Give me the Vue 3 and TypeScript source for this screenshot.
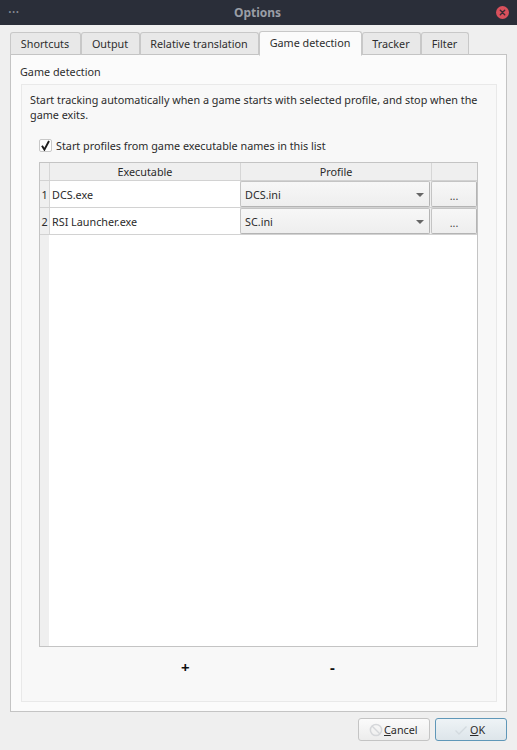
<script setup lang="ts">
const tabs: string[] = ['Shortcuts', 'Output', 'Relative translation', 'Game detection', 'Tracker', 'Filter']
const tabWidths: Record<string, number> = { Shortcuts: 71, Output: 59, 'Relative translation': 119, 'Game detection': 103, Tracker: 59, Filter: 48 }
const rows = [
  { n: 1, exe: 'DCS.exe', profile: 'DCS.ini' },
  { n: 2, exe: 'RSI Launcher.exe', profile: 'SC.ini' },
]
</script>

<template>
  <div class="window">
    <header class="titlebar">
      <span class="dots">···</span>
      <span class="title">Options</span>
      <span class="close">
        <svg width="13" height="13" viewBox="0 0 13 13">
          <circle cx="6.5" cy="6.5" r="6.5" fill="#d9505c" />
          <path d="M4.3 4.3l4.4 4.4M8.7 4.3l-4.4 4.4" stroke="#3a2a33" stroke-width="1.4" stroke-linecap="round" />
        </svg>
      </span>
    </header>

    <main class="content">
      <nav class="tabs">
        <div
          v-for="t in tabs"
          :key="t"
          class="tab"
          :class="{ active: t === 'Game detection' }"
          :style="{ width: tabWidths[t] + 'px' }"
        >{{ t }}</div>
      </nav>
      <section class="pane">
        <div class="group-title">Game detection</div>
        <div class="group">
          <p class="desc">Start tracking automatically when a game starts with selected profile, and stop when the game exits.</p>
          <label class="check">
            <span class="box">
              <svg width="11" height="11" viewBox="0 0 11 11">
                <path d="M2 5.8L4.4 9.6 9 1" fill="none" stroke="#1c1c1c" stroke-width="1.9" />
              </svg>
            </span>
            Start profiles from game executable names in this list
          </label>

          <div class="table">
            <div class="head">
              <div class="corner"></div>
              <div class="hcell exe">Executable</div>
              <div class="hcell prof">Profile</div>
              <div class="hcell extra"></div>
            </div>
            <div class="body">
              <div v-for="r in rows" :key="r.n" class="row">
                <div class="num">{{ r.n }}</div>
                <div class="cell exe">{{ r.exe }}</div>
                <div class="cell prof">
                  <div class="combo">
                    <span>{{ r.profile }}</span>
                    <i class="arrow"></i>
                  </div>
                </div>
                <div class="cell extra"><div class="more">...</div></div>
              </div>
              <div class="rest"><div class="gutter"></div></div>
            </div>
          </div>

          <div class="actions">
            <span class="act plus">+</span>
            <span class="act minus">-</span>
          </div>
        </div>
      </section>

      <footer class="buttons">
        <button class="btn cancel">
          <svg width="16" height="16" viewBox="0 0 16 16">
            <circle cx="8" cy="8" r="5.6" fill="none" stroke="#d5d7da" stroke-width="1.5" />
            <path d="M4 4l8 8" stroke="#d5d7da" stroke-width="1.5" />
          </svg>
          <span><u>C</u>ancel</span>
        </button>
        <button class="btn ok">
          <svg width="16" height="16" viewBox="0 0 16 16">
            <path d="M2.5 8.5l3.5 3.5 7.5-7.5" fill="none" stroke="#d3dadf" stroke-width="1.3" />
          </svg>
          <span><u>O</u>K</span>
        </button>
      </footer>
    </main>
  </div>
</template>

<style>
html, body { margin: 0; padding: 0; background: #efefef; }
</style>

<style scoped>
.window {
  width: 517px;
  height: 750px;
  display: flex;
  flex-direction: column;
  background: #efefef;
  font-family: "Noto Sans", "Open Sans", sans-serif;
  font-size: 10.8px;
  color: #2b2b2b;
  overflow: hidden;
}
.titlebar {
  position: relative;
  box-sizing: border-box;
  height: 25px;
  flex: none;
  padding-right: 2px;
  background: #2a2e39;
  display: flex;
  align-items: center;
  justify-content: center;
}
.dots {
  position: absolute;
  left: 8px;
  top: 4px;
  color: #8b8f98;
  font-size: 14px;
  line-height: 16px;
}
.title { color: #9a9ea6; font-weight: 700; font-size: 12px; }
.close { position: absolute; left: 496px; top: 6px; width: 13px; height: 13px; display: flex; }
.content { flex: 1; padding: 5px 10px 0; display: flex; flex-direction: column; min-height: 0; }
.tabs { display: flex; height: 25px; align-items: flex-end; position: relative; z-index: 1; }
.tab {
  box-sizing: border-box;
  height: 23px;
  border: 1px solid #c8c8c8;
  border-bottom: 1px solid #c4c4c4;
  border-radius: 3px 3px 0 0;
  background: #e8e8e8;
  display: flex;
  align-items: center;
  justify-content: center;
  white-space: nowrap;
  color: #2e2e2e;
  padding: 0 1px 1px 0;
}
.tab.active {
  height: 25px;
  background: #fbfbfb;
  border-bottom-color: #fbfbfb;
  margin-bottom: -1px;
  padding-bottom: 3px;
}
.pane {
  box-sizing: border-box;
  height: 658px;
  margin-top: -1px;
  width: 497px;
  border: 1px solid #c4c4c4;
  background: #fbfbfb;
  padding: 9px 9px 9px 10px;
  display: flex;
  flex-direction: column;
}
.group-title { height: 20px; line-height: 18px; flex: none; color: #2e2e2e; margin: -1px 0 1px -1px; }
.group {
  flex: 1;
  box-sizing: border-box;
  border: 1px solid #e9e9e9;
  background: #f8f8f8;
  display: flex;
  flex-direction: column;
  padding: 7px 18px 0 17px;
  min-height: 0;
}
.desc { margin: 0 0 0 -9px; width: 465px; line-height: 15px; color: #2b2b2b; }
.check { display: flex; align-items: center; gap: 4px; height: 16px; margin-top: 15px; white-space: nowrap; }
.box {
  box-sizing: border-box;
  width: 13px;
  height: 13px;
  border: 1px solid #c8c8c8;
  border-radius: 2px;
  background: #fdfdfd;
  display: flex;
  align-items: center;
  justify-content: center;
}
.table {
  box-sizing: border-box;
  height: 485px;
  margin-top: 9px;
  border: 1px solid #c4c4c4;
  background: #fff;
  display: flex;
  flex-direction: column;
  flex: none;
}
.head { display: flex; height: 17px; flex: none; background: #efefef; border-bottom: 1px solid #d2d2d2; }
.corner { width: 9px; flex: none; }
.hcell { display: flex; align-items: center; justify-content: center; box-sizing: border-box; border-left: 1px solid #d6d6d6; color: #2b2b2b; }
.exe { width: 191px; flex: none; }
.prof { width: 191px; flex: none; }
.extra { flex: 1; }
.body { flex: 1; display: flex; flex-direction: column; min-height: 0; }
.row { display: flex; height: 27px; flex: none; box-sizing: border-box; border-bottom: 1px solid #d2d2d2; }
.num { width: 9px; flex: none; background: #efefef; display: flex; align-items: center; justify-content: center; }
.cell { box-sizing: border-box; display: flex; align-items: center; }
.cell.exe { padding-left: 2px; background: #fff; border-left: 1px solid #d6d6d6; }
.cell.prof, .cell.extra { background: #efefef; align-items: stretch; }
.cell.prof { padding-right: 1px; }
.combo, .more {
  flex: 1;
  box-sizing: border-box;
  border: 1px solid #c4c4c4;
  border-right-color: #b4b4b4;
  border-bottom-color: #b4b4b4;
  border-radius: 2px;
  background: linear-gradient(#f7f7f7, #eeeeee);
  display: flex;
  align-items: center;
}
.combo { justify-content: space-between; padding: 0 5px 0 4px; }
.arrow { width: 0; height: 0; border-left: 4px solid transparent; border-right: 4px solid transparent; border-top: 4px solid #666; margin-top: 1px; }
.more { justify-content: center; color: #444; line-height: 1; padding-top: 4px; }
.rest { flex: 1; display: flex; }
.gutter { width: 9px; background: #efefef; }
.actions { position: relative; height: 46px; flex: none; }
.act { position: absolute; top: 9px; font-size: 15px; font-weight: 700; color: #111; line-height: 22px; }
.plus { left: 142px; }
.minus { left: 291px; }
.buttons { flex: 1; display: flex; justify-content: flex-end; align-items: flex-start; gap: 5px; padding: 6px 0 0; width: 497px; }
.btn {
  box-sizing: border-box;
  height: 23px;
  width: 72px;
  border: 1px solid #c4c4c4;
  border-radius: 3px;
  background: linear-gradient(#fbfbfb, #ececec);
  font: inherit;
  color: #2b2b2b;
  display: flex;
  align-items: center;
  justify-content: flex-start;
  padding: 0;
}
.btn.cancel { padding-left: 9px; }
.btn.ok {
  padding-left: 17px;
  gap: 1px;
  border-color: #5f97b8;
  background: linear-gradient(#eef3f6, #dde5ea);
}
</style>
